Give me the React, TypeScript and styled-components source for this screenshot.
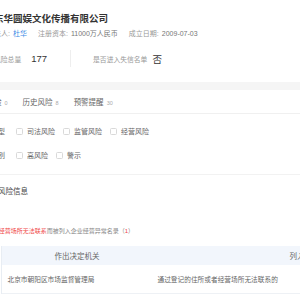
import React from "react";
import styled, { createGlobalStyle } from "styled-components";

const GlobalStyle = createGlobalStyle`
  html, body {
    margin: 0;
    padding: 0;
    background: #ffffff;
    overflow: hidden;
  }
  body {
    font-family: "Liberation Sans", "Noto Sans CJK SC", sans-serif;
  }
`;

const Viewport = styled.div`
  width: 300px;
  height: 300px;
  overflow: hidden;
`;

const Page = styled.div`
  width: 720px;
  margin-left: -6px;
  white-space: nowrap;
`;

const Header = styled.div`
  display: flex;
  flex-direction: column;
  padding: 12px 0 15px;
`;

const Title = styled.div`
  font-size: 9.5px;
  line-height: 14px;
  height: 14px;
  font-weight: 700;
  color: #333;
`;

const MetaRow = styled.div`
  display: flex;
  align-items: center;
  gap: 11px;
  height: 10px;
  margin-top: 3px;
  font-size: 7px;
  line-height: 10px;
`;

const MetaItem = styled.span`
  color: #999;
`;

const MetaValue = styled.span<{ $link?: boolean }>`
  margin-left: 3px;
  color: ${(p) => (p.$link ? "#3d8ce6" : "#777")};
`;

const StatsRow = styled.div`
  display: flex;
  align-items: center;
  height: 17px;
  margin-top: 11px;
`;

const StatLabel = styled.span`
  font-size: 6.8px;
  color: #999;
`;

const StatValue = styled.span<{ $gap: number }>`
  margin-left: ${(p) => p.$gap}px;
  font-size: 9.5px;
  color: #333;
`;

const StatDivider = styled.span`
  width: 1px;
  height: 17px;
  background: #eeeeee;
  margin: 0 22px 0 23px;
`;

const Band = styled.div`
  height: 8px;
  background: #f5f5f5;
`;

const TabBar = styled.div`
  display: flex;
  align-items: center;
  gap: 15px;
  height: 23px;
  padding-left: 0;
  margin-left: -22.5px;
  border-bottom: 1px solid #f0f0f0;
`;

const Tab = styled.div`
  display: flex;
  align-items: baseline;
  font-size: 7.5px;
  color: #666;
`;

const TabCount = styled.span`
  margin-left: 3px;
  font-size: 5.5px;
  color: #aaa;
`;

const Filters = styled.div`
  display: flex;
  flex-direction: column;
  gap: 10px;
  padding: 10px 0 12px;
  border-bottom: 1px solid #f2f2f2;
`;

const FilterRow = styled.div`
  display: flex;
  align-items: center;
  height: 14px;
  font-size: 7px;
`;

const FilterLabel = styled.span`
  width: 28px;
  margin-left: -17px;
  margin-right: 11px;
  color: #666;
`;

const Option = styled.label`
  display: flex;
  align-items: center;
  margin-right: 8px;
  color: #666;
`;

const Box = styled.span`
  box-sizing: border-box;
  width: 7px;
  height: 7px;
  border: 1px solid #d9d9d9;
  border-radius: 1.5px;
  background: #fff;
  margin-right: 4px;
`;

const SectionTitle = styled.div`
  padding-top: 12px;
  height: 10px;
  line-height: 10px;
  margin-left: 4px;
  font-size: 7.5px;
  color: #444;
`;

const Notice = styled.div`
  margin-top: 29px;
  margin-left: -49.3px;
  height: 10px;
  line-height: 10px;
  font-size: 6px;
  color: #888;
`;

const Red = styled.span`
  color: #f04848;
`;

const Table = styled.div`
  margin-top: 10px;
  margin-left: 7px;
  border-left: 1px solid #e8edf3;
`;

const HeadRow = styled.div`
  display: grid;
  grid-template-columns: 150px 350px 150px;
  height: 18.5px;
  align-items: center;
  background: #f2f6fc;
  font-size: 7.5px;
  color: #666;
`;

const HeadCell = styled.div`
  text-align: center;
`;

const BodyRow = styled.div`
  display: grid;
  grid-template-columns: 150px 350px 150px;
  height: 28px;
  align-items: center;
  border-bottom: 1px solid #eef1f5;
  font-size: 6.7px;
  color: #666;
`;

const BodyCell = styled.div`
  padding-left: 5.5px;
`;

const filterRows = [
  { label: "风险类型", options: ["司法风险", "监管风险", "经营风险"] },
  { label: "风险级别", options: ["高风险", "警示"] },
];

const tabs = [
  { name: "周边风险", count: 0 },
  { name: "历史风险", count: 8 },
  { name: "预警提醒", count: 30 },
];

export default function App() {
  return (
    <Viewport>
      <GlobalStyle />
      <Page>
        <Header>
          <Title>东华圆娱文化传播有限公司</Title>
          <MetaRow>
            <MetaItem>
              法人:<MetaValue $link>杜华</MetaValue>
            </MetaItem>
            <MetaItem>
              注册资本:<MetaValue>11000万人民币</MetaValue>
            </MetaItem>
            <MetaItem>
              成立日期:<MetaValue>2009-07-03</MetaValue>
            </MetaItem>
          </MetaRow>
          <StatsRow>
            <StatLabel>风险总量</StatLabel>
            <StatValue $gap={10}>177</StatValue>
            <StatDivider />
            <StatLabel>是否进入失信名单</StatLabel>
            <StatValue $gap={5}>否</StatValue>
          </StatsRow>
        </Header>
        <Band />
        <TabBar>
          {tabs.map((t) => (
            <Tab key={t.name}>
              {t.name}
              <TabCount>{t.count}</TabCount>
            </Tab>
          ))}
        </TabBar>
        <Filters>
          {filterRows.map((r) => (
            <FilterRow key={r.label}>
              <FilterLabel>{r.label}</FilterLabel>
              {r.options.map((o) => (
                <Option key={o}>
                  <Box />
                  {o}
                </Option>
              ))}
            </FilterRow>
          ))}
        </Filters>
        <SectionTitle>风险信息</SectionTitle>
        <Notice>
          <Red>通过登记的住所或者经营场所无法联系</Red>而被列入企业经营异常名录（<Red>1</Red>）
        </Notice>
        <Table>
          <HeadRow>
            <HeadCell>作出决定机关</HeadCell>
            <HeadCell>列入经营异常名录原因</HeadCell>
            <HeadCell>列入日期</HeadCell>
          </HeadRow>
          <BodyRow>
            <BodyCell>北京市朝阳区市场监督管理局</BodyCell>
            <BodyCell>通过登记的住所或者经营场所无法联系的</BodyCell>
            <BodyCell>2019-06-11</BodyCell>
          </BodyRow>
        </Table>
      </Page>
    </Viewport>
  );
}
